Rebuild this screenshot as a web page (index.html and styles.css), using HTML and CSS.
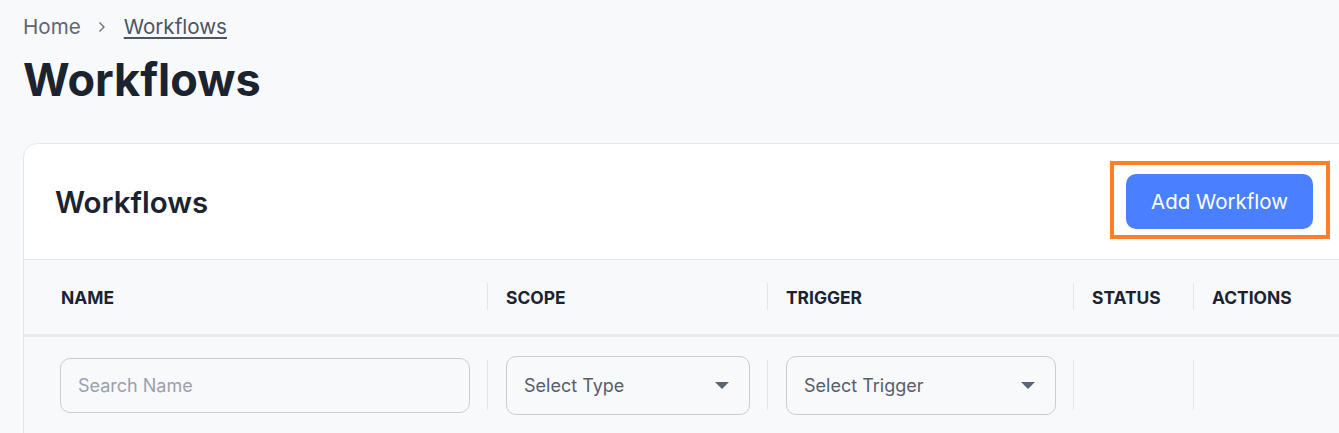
FILE: index.html
```html
<!DOCTYPE html>
<html lang="en">
  <head>
    <meta charset="UTF-8" />
    <meta name="viewport" content="width=device-width, initial-scale=1.0" />
    <title>Workflows</title>
    <link rel="stylesheet" href="styles.css">
  </head>
  <body>
    <div class="page">
      <!-- breadcrumb -->
      <nav class="crumbs">
        <span class="crumb-home">Home</span>
        <svg class="crumb-sep" width="10" height="14" viewBox="0 0 10 14">
          <path d="M2.5 2.5 L7 7 L2.5 11.5" fill="none" stroke="#6b7280" stroke-width="1.4" />
        </svg>
        <a class="crumb-current" href="#">Workflows</a>
      </nav>

      <h1 class="page-title">Workflows</h1>

      <div class="card">
        <div class="card-head">
          <h2 class="card-title">Workflows</h2>
          <div class="btn-wrap">
            <button class="add-btn">Add Workflow</button>
            <span class="highlight"></span>
          </div>
        </div>

        <div class="table">
          <div class="row head-row">
            <div class="cell">NAME</div>
            <div class="cell sep">SCOPE</div>
            <div class="cell sep">TRIGGER</div>
            <div class="cell sep">STATUS</div>
            <div class="cell sep">ACTIONS</div>
          </div>
          <div class="row filter-row">
            <div class="cell">
              <input class="field search" type="text" placeholder="Search Name" />
            </div>
            <div class="cell sep">
              <div class="field select">
                <span>Select Type</span>
                <span class="caret"></span>
              </div>
            </div>
            <div class="cell sep">
              <div class="field select">
                <span>Select Trigger</span>
                <span class="caret"></span>
              </div>
            </div>
            <div class="cell sep"></div>
            <div class="cell sep"></div>
          </div>
        </div>
      </div>
    </div>
  </body>
</html>
```

FILE: styles.css
```css
html {
  overflow: hidden;
}

body {
  margin: 0;
  padding: 0;
  background: #f8f9fb;
  font-family: "Inter", "Noto Sans", sans-serif;
  color: #1b2330;
}

.page {
  padding: 14px 0 0 23px;
  width: 1400px;
}

/* breadcrumb */
.crumbs {
  display: flex;
  align-items: center;
  font-size: 20.6px;
  line-height: 26px;
  height: 26px;
}

.crumb-home {
  color: #5f6775;
}

.crumb-sep {
  margin: 0 17px 0 16px;
}

.crumb-current {
  color: #4b5563;
  text-decoration: underline;
  text-underline-offset: 3px;
}

.page-title {
  margin: 14px 0 0 0;
  font-size: 45px;
  line-height: 52px;
  font-weight: 700;
  color: #1b2330;
}

/* card */
.card {
  margin-top: 37px;
  width: 1360px;
  background: #fff;
  border: 1px solid #e5e7eb;
  border-radius: 14px;
}

.card-head {
  display: flex;
  align-items: center;
  justify-content: space-between;
  height: 115px;
  padding: 0 71px 0 31px;
  border-bottom: 1px solid #e5e7eb;
}

.card-title {
  margin: 0;
  font-size: 29.5px;
  font-weight: 600;
  color: #1b2330;
}

.btn-wrap {
  position: relative;
}

.add-btn {
  width: 187px;
  height: 55px;
  border: none;
  border-radius: 10px;
  background: #4a80ff;
  color: #fff;
  font-family: inherit;
  font-size: 20.5px;
}

/* orange annotation frame around the button */
.highlight {
  position: absolute;
  left: -16px;
  top: -13px;
  width: 212px;
  height: 70px;
  border: 4px solid #ff7f27;
  pointer-events: none;
}

/* table */
.table {
  background: #f8f9fb;
  border-radius: 0 0 14px 14px;
  padding-bottom: 24px;
}

.row {
  display: grid;
  grid-template-columns: 463px 280px 306px 120px 1fr;
  align-items: center;
}

.head-row {
  height: 74px;
  border-bottom: 3px solid #e9ebee;
  font-size: 17.4px;
  font-weight: 700;
  color: #1b2330;
}

.filter-row {
  height: 96px;
}

.cell {
  position: relative;
  padding: 0 17px 0 19px;
  box-sizing: border-box;
}

.head-row .cell:first-child {
  padding-left: 37px;
}

.filter-row .cell:first-child {
  padding-left: 36px;
}

.sep::before {
  content: "";
  position: absolute;
  left: 0;
  top: 50%;
  width: 1px;
  background: #e2e5e9;
}

.head-row .sep::before {
  height: 27px;
  margin-top: -14px;
}

.filter-row .sep::before {
  height: 50px;
  margin-top: -25px;
}

.field {
  box-sizing: border-box;
  width: 100%;
  border: 1px solid #c8ced6;
  border-radius: 10px;
  background: #f8f9fb;
  font-family: inherit;
  font-size: 18px;
}

.search {
  height: 55px;
  padding: 0 17px;
  color: #1b2330;
}

.search::placeholder {
  color: #9aa1ab;
}

.select {
  height: 59px;
  display: flex;
  align-items: center;
  justify-content: space-between;
  padding: 0 20px 0 17px;
  color: #565e6b;
}

.caret {
  width: 0;
  height: 0;
  border-left: 7px solid transparent;
  border-right: 7px solid transparent;
  border-top: 7px solid #5a6472;
}
```
